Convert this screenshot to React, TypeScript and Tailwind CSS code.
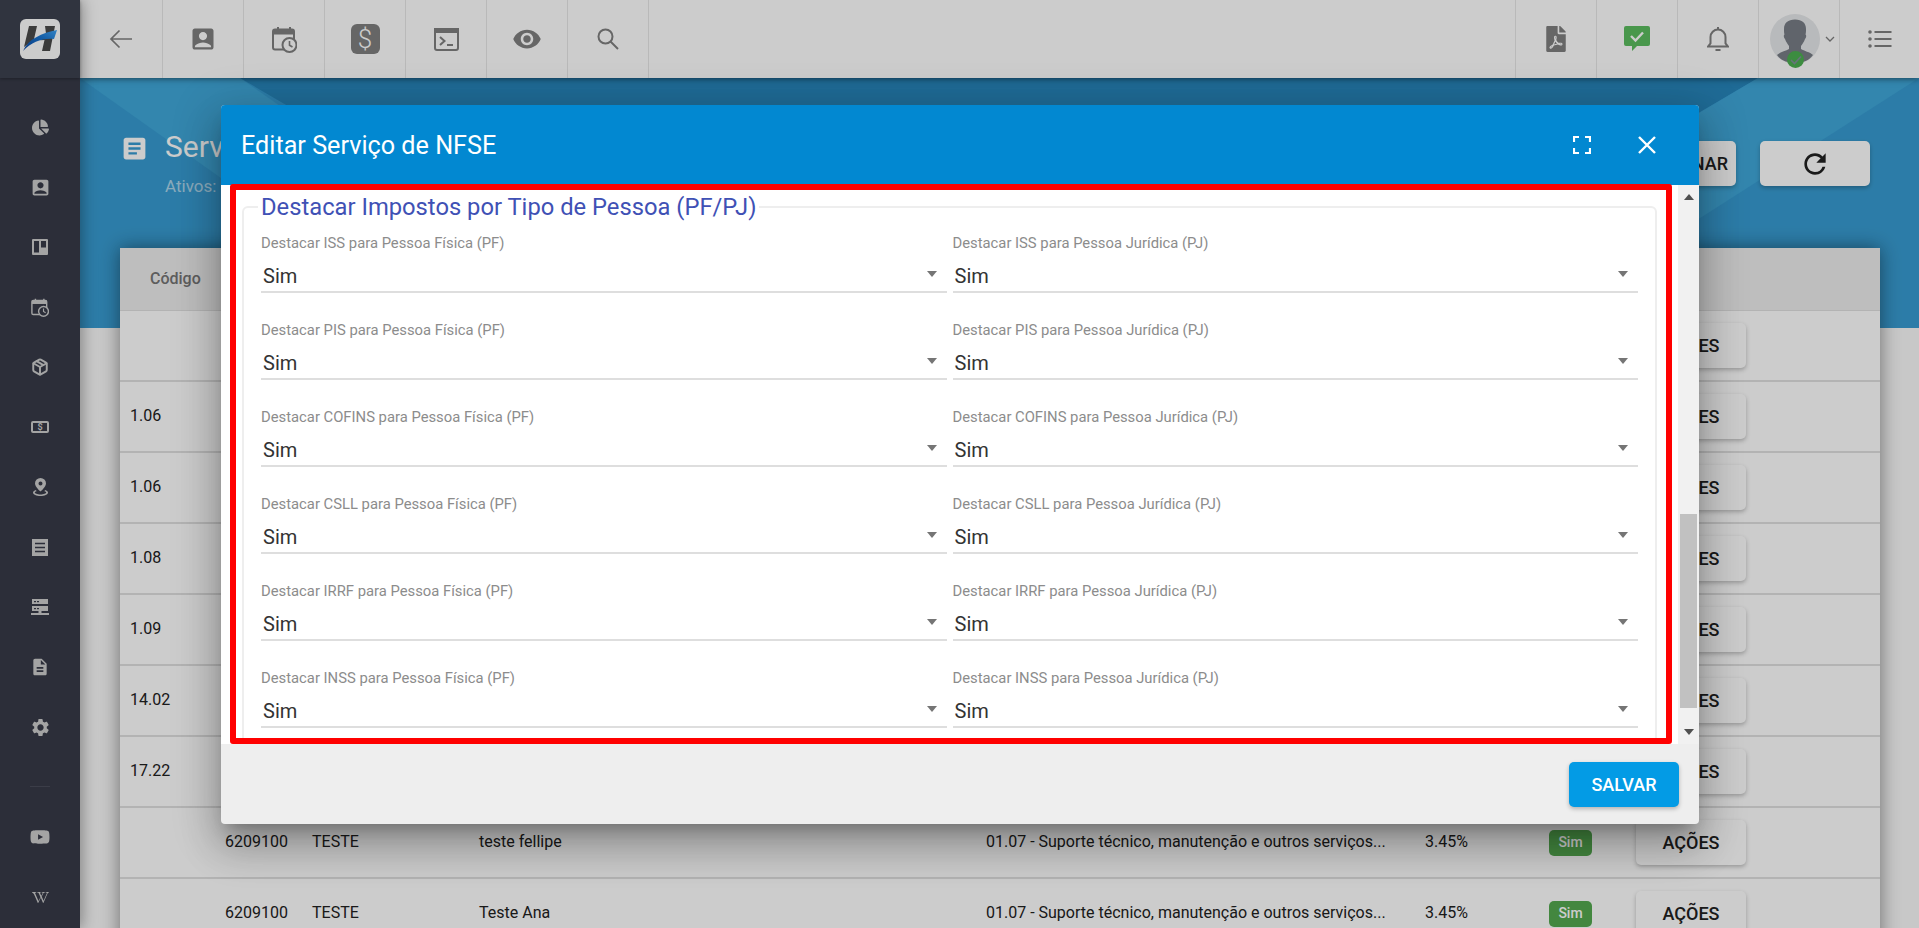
import React from "react";
import {
  MdAccountBox, MdVisibility, MdRefresh, MdArticle, MdDescription, MdSettings,
} from "react-icons/md";
import { FaFilePdf, FaChartPie, FaYoutube, FaWikipediaW } from "react-icons/fa";
import { FiPackage } from "react-icons/fi";

const CalendarClock = ({ w, h, color, bg }: { w: number; h: number; color: string; bg: string }) => (
  <svg width={w} height={h} viewBox="0 0 25 27" fill="none">
    <path d="M6 1v4M18 1v4" stroke={color} strokeWidth="2" />
    <rect x="1" y="3.5" width="21" height="20" rx="2" stroke={color} strokeWidth="2" />
    <rect x="1" y="3.5" width="21" height="5" fill={color} />
    <circle cx="17.5" cy="19" r="7" fill={bg} stroke={color} strokeWidth="2" />
    <path d="M17.5 15v4.2l3 1.8" stroke={color} strokeWidth="1.6" />
  </svg>
);

const Cell = ({ w = "w-[81px]", border = "border-l", children }: { w?: string; border?: string; children: React.ReactNode }) => (
  <div className={`${w} ${border} h-full shrink-0 border-[#e8e8e8] flex items-center justify-center`}>{children}</div>
);

const TopBar = () => (
  <div className="relative z-20 h-[78px] shrink-0 bg-white flex justify-between shadow-[0_1px_6px_rgba(0,0,0,0.5)]">
    <div className="flex h-full">
      <Cell w="w-[83px]" border="border-r">
        <svg width="24" height="20" viewBox="0 0 24 20" fill="none" stroke="#808080" strokeWidth="1.7">
          <path d="M23 10H2M10.5 1.5 2 10l8.5 8.5" />
        </svg>
      </Cell>
      <Cell border="border-r"><MdAccountBox size={28} color="#808080" /></Cell>
      <Cell border="border-r"><CalendarClock w={25} h={27} color="#808080" bg="#ffffff" /></Cell>
      <Cell border="border-r">
        <div className="w-[29px] h-[30px] rounded-md bg-[#808080] flex items-center justify-center text-white text-[26px] font-light leading-none">$</div>
      </Cell>
      <Cell border="border-r">
        <svg width="25" height="23" viewBox="0 0 25 23" fill="none" stroke="#808080" strokeWidth="2">
          <rect x="1" y="1" width="23" height="21" rx="2" />
          <rect x="1" y="1" width="23" height="3" fill="#808080" />
          <path d="m6 9 4.5 4L6 17M13 17h6" />
        </svg>
      </Cell>
      <Cell border="border-r"><MdVisibility size={30} color="#808080" /></Cell>
      <Cell border="border-r">
        <svg width="22" height="22" viewBox="0 0 22 22" fill="none" stroke="#808080" strokeWidth="2">
          <circle cx="8.5" cy="8.5" r="7" /><path d="m13.5 13.5 7.5 7.5" />
        </svg>
      </Cell>
    </div>
    <div className="flex h-full">
      <Cell><FaFilePdf size={26} color="#808080" /></Cell>
      <Cell>
        <svg width="26" height="26" viewBox="0 0 26 26">
          <path d="M2 0h22a2 2 0 0 1 2 2v16a2 2 0 0 1-2 2H13l-5 5v-5H2a2 2 0 0 1-2-2V2a2 2 0 0 1 2-2Z" fill="#5cbd60" />
          <path d="m7 10 4.5 4.5L19 6.5" stroke="#ffffff" strokeWidth="2.4" fill="none" />
        </svg>
      </Cell>
      <Cell>
        <svg width="22" height="26" viewBox="0 0 22 26" fill="none" stroke="#808080" strokeWidth="2">
          <path d="M1 20.5h20l-2.5-3V11a7.5 7.5 0 0 0-15 0v6.500Z" />
          <path d="M11 1v2M8.500 24h5" />
        </svg>
      </Cell>
      <Cell>
        <div className="relative w-full h-full flex items-center">
          <div className="relative ml-[11px] w-[50px] h-[50px] rounded-full bg-[#e7e9eb] overflow-hidden">
            <svg width="50" height="50" viewBox="0 0 50 50" fill="#787d86">
              <path d="M25 5.500c7 0 11 3.500 11 9.500 0 2 0 4-.5 5.500 1 .5 1 3-.5 4.500-1 3-3 5.500-4 7v3c3 2 9 3 12 6-4 6-11 8-18 8s-14-2-18-8c3-3 9-4 12-6v-3c-1-1.500-3-4-4-7-1.500-1.500-1.500-4-.5-4.500C14 19 14 17 14 15c0-6 4-9.500 11-9.500Z" />
            </svg>
          </div>
          <div className="absolute left-[28px] top-[51px] w-[17px] h-[17px] rounded-full bg-[#4caf50] flex items-center justify-center">
            <svg width="12" height="10" viewBox="0 0 12 10" fill="none" stroke="#80909a" strokeWidth="1.6"><path d="m1 5 3.500 3.500L11 1.500" /></svg>
          </div>
          <svg className="ml-[5px]" width="10" height="7" viewBox="0 0 10 7" fill="none" stroke="#808080" strokeWidth="1.3"><path d="m1 1 4 4 4-4" /></svg>
        </div>
      </Cell>
      <Cell w="w-[80px]">
        <svg width="24" height="20" viewBox="0 0 24 20" fill="#808080">
          <circle cx="2" cy="3" r="1.800" /><circle cx="2" cy="10" r="1.800" /><circle cx="2" cy="17" r="1.800" />
          <rect x="6.500" y="2" width="17" height="2" /><rect x="6.500" y="9" width="17" height="2" /><rect x="6.500" y="16" width="17" height="2" />
        </svg>
      </Cell>
    </div>
  </div>
);

const ICON = "#cdcdcd";
const DARK = "#373a48";
const SideSlot = ({ children }: { children: React.ReactNode }) => (
  <div className="h-[60px] flex items-center justify-center">{children}</div>
);

const Sidebar = () => (
  <div className="relative z-30 w-[80px] shrink-0 h-full bg-[#373a48] flex flex-col shadow-[2px_0_14px_rgba(0,0,0,0.35)]">
    <div className="h-[78px] shrink-0 bg-[#3d414f] flex items-center justify-center shadow-[0_1px_3px_rgba(0,0,0,0.3)]">
      <svg width="40" height="40" viewBox="0 0 40 40">
        <defs>
          <linearGradient id="logoBlue" x1="0" y1="1" x2="1" y2="0">
            <stop offset="0" stopColor="#0d47a1" />
            <stop offset="0.6" stopColor="#1976d2" />
            <stop offset="1" stopColor="#42a5f5" />
          </linearGradient>
        </defs>
        <rect width="40" height="40" rx="6" fill="#ffffff" />
        <path d="M9 7h8l-3.200 14L4 28ZM25 7h10l-5 25h-8l2.500-11-4 .2 1.500-2 4.500-1Z" fill="#4a4a4a" />
        <path d="M3 32C8 20 22 14 37 11l-3 9C22 19 12 23 3 32Z" fill="url(#logoBlue)" />
      </svg>
    </div>
    <div className="pt-[19px] flex flex-col">
      <SideSlot><FaChartPie size={17} color={ICON} /></SideSlot>
      <SideSlot><MdAccountBox size={21} color={ICON} /></SideSlot>
      <SideSlot>
        <svg width="16" height="16" viewBox="0 0 16 16"><rect width="16" height="16" rx="1" fill={ICON} /><rect x="2" y="2" width="5" height="11.500" fill={DARK} /><rect x="9" y="2" width="5" height="6.500" fill={DARK} /></svg>
      </SideSlot>
      <SideSlot><CalendarClock w={18} h={19} color={ICON} bg={DARK} /></SideSlot>
      <SideSlot><FiPackage size={18} color={ICON} strokeWidth={2.6} /></SideSlot>
      <SideSlot>
        <div className="w-[18px] h-[12px] border-2 border-[#cdcdcd] rounded-[2px] bg-[#373a48] flex items-center justify-center text-[9px] font-bold text-[#cdcdcd] leading-none">$</div>
      </SideSlot>
      <SideSlot>
        <svg width="15" height="18" viewBox="0 0 15 18" fill={ICON}>
          <path fillRule="evenodd" d="M7.500 0a5.500 5.500 0 0 1 5.500 5.500C13 9 7.500 13.500 7.500 13.500S2 9 2 5.500A5.500 5.500 0 0 1 7.500 0Zm0 3.500a2 2 0 1 0 0 4 2 2 0 0 0 0-4Z" />
          <path d="M3 12c-2 .7-3 1.500-3 2.500C0 16.500 3.500 18 7.500 18S15 16.500 15 14.500c0-1-1-1.800-3-2.500l-.5 1.300c1 .3 1.700.7 1.700 1.200 0 .8-2.500 2-5.700 2s-5.700-1.200-5.700-2c0-.5.700-.9 1.700-1.200Z" />
        </svg>
      </SideSlot>
      <SideSlot>
        <svg width="16" height="17" viewBox="0 0 16 17"><rect width="16" height="17" fill={ICON} /><path d="M3 4.500h10M3 8.500h10M3 12.500h10" stroke={DARK} strokeWidth="1.500" /></svg>
      </SideSlot>
      <SideSlot>
        <svg width="18" height="17" viewBox="0 0 18 17" fill={ICON}>
          <rect x="1" y="0" width="16" height="5" /><rect x="1" y="7" width="16" height="5" /><rect x="7.500" y="12" width="3" height="3" /><rect x="0" y="14" width="18" height="2" />
          <rect x="3" y="2" width="2" height="1.200" fill={DARK} /><rect x="6" y="2" width="2" height="1.200" fill={DARK} /><rect x="3" y="9" width="2" height="1.200" fill={DARK} /><rect x="6" y="9" width="2" height="1.200" fill={DARK} />
        </svg>
      </SideSlot>
      <SideSlot><MdDescription size={20} color={ICON} /></SideSlot>
      <SideSlot><MdSettings size={21} color={ICON} /></SideSlot>
    </div>
    <div className="mt-[29px] mx-[30px] h-px bg-[#4a4d5a]" />
    <div className="mt-[20px] flex flex-col">
      <SideSlot><FaYoutube size={20} color={ICON} /></SideSlot>
      <SideSlot><FaWikipediaW size={17} color={ICON} /></SideSlot>
    </div>
  </div>
);

const Hero = () => (
  <div className="relative h-[250px] shrink-0 bg-[#389cd2] overflow-hidden">
    <svg className="absolute inset-0" width="1839" height="250" viewBox="0 0 1839 250">
      <polygon points="160,0 1678,0 1320,210 520,210" fill="#2786bc" />
      <polygon points="0,0 160,0 260,70 240,150 141,100" fill="#40a8da" />
      <polygon points="1678,0 1839,0 1617,142 1520,142 1560,70" fill="#40a8da" />
    </svg>
    <div className="relative flex pl-[43px] pr-[49px] pt-[51px] text-white">
      <MdArticle size={29} className="mt-[5px] ml-[-3px] text-white" />
      <div className="ml-[16px] w-[56px] overflow-hidden whitespace-nowrap">
        <div className="text-[30px] leading-[36px]">Serviços</div>
        <div className="mt-[11px] text-[17px] leading-[20px] text-white/60">Ativos: 9</div>
      </div>
      <div className="ml-auto mt-[12px] flex gap-[24px]">
        <button className="h-[45px] w-[116px] rounded-[5px] bg-white text-[#212121] text-[18px] font-medium flex items-center justify-end pr-[8px] shadow-[0_2px_4px_rgba(0,0,0,0.25)]">ADICIONAR</button>
        <button className="h-[45px] w-[110px] rounded-[5px] bg-white text-[#212121] flex items-center justify-center shadow-[0_2px_4px_rgba(0,0,0,0.25)]">
          <MdRefresh size={32} />
        </button>
      </div>
    </div>
  </div>
);

type Row = { code?: string; cnae?: string; t?: string; name?: string; serv?: string; pct?: string };
const SERV = "01.07 - Suporte técnico, manutenção e outros serviços...";
const rows: Row[] = [
  {}, { code: "1.06" }, { code: "1.06" }, { code: "1.08" }, { code: "1.09" }, { code: "14.02" }, { code: "17.22" },
  { cnae: "6209100", t: "TESTE", name: "teste fellipe", serv: SERV, pct: "3.45%" },
  { cnae: "6209100", t: "TESTE", name: "Teste Ana", serv: SERV, pct: "3.45%" },
];

const Table = () => (
  <div className="relative z-10 mt-[-80px] ml-[40px] mr-[39px] bg-white shadow-[0_0_18px_rgba(0,0,0,0.45)] text-[16px] text-[#212121]">
    <div className="h-[63px] bg-[#eeeeee] border-b border-[#e0e0e0] flex items-center pl-[30px] font-medium text-[#757575]">Código</div>
    {rows.map((r, i) => (
      <div key={i} className="h-[71px] border-b-2 border-[#e0e0e0] grid grid-cols-[96px_87px_166px_507px_439px_124px_87px_auto] items-center pl-[10px]">
        <div className="pb-[2px]">{r.code}</div>
        <div className="pb-[2px] ml-[-1px]">{r.cnae}</div>
        <div className="pb-[2px] ml-[-1px]">{r.t}</div>
        <div className="pb-[2px]">{r.name}</div>
        <div className="pb-[2px]">{r.serv}</div>
        <div className="pb-[2px]">{r.pct}</div>
        <div>
          {r.cnae && <span className="flex w-[43px] h-[26px] rounded-[5px] bg-[#54a94f] text-white text-[14px] font-medium items-center justify-center">Sim</span>}
        </div>
        <button className="w-[110px] h-[45px] rounded-[5px] bg-white text-[18px] font-medium shadow-[0_2px_4px_rgba(0,0,0,0.25)]">AÇÕES</button>
      </div>
    ))}
  </div>
);

const taxes = ["ISS", "PIS", "COFINS", "CSLL", "IRRF", "INSS"];

const Field = ({ label }: { label: string }) => (
  <div className="h-[87px]">
    <div className="h-[20px] text-[14.800px] leading-[20px] text-[#8c8c8c]">{label}</div>
    <div className="mt-[8px] h-[32px] border-b-2 border-[#dedede] flex items-center justify-between pl-[2px] pr-[10px]">
      <span className="text-[20px] text-[#333333] leading-[30px]">Sim</span>
      <svg className="mb-[4px]" width="10" height="6" viewBox="0 0 10 6" fill="#757575"><path d="M0 0h10L5 6Z" /></svg>
    </div>
  </div>
);

const Modal = () => (
  <div className="absolute z-50 left-[221px] top-[105px] w-[1478px] h-[719px] rounded-[4px] overflow-hidden flex flex-col bg-[#eeeeee] shadow-[0_11px_15px_-7px_rgba(0,0,0,0.25),0_24px_38px_3px_rgba(0,0,0,0.18),0_9px_46px_8px_rgba(0,0,0,0.16)]">
    <div className="h-[80px] shrink-0 bg-[#0288d1] flex items-center pl-[20px] text-white">
      <div className="text-[25.200px] pt-[1px]">Editar Serviço de NFSE</div>
      <div className="ml-auto w-[24px] h-[24px] mr-[41px] flex items-center justify-center">
        <svg width="18" height="18" viewBox="0 0 18 18" fill="none" stroke="#ffffff" strokeWidth="2.200">
          <path d="M1 6V1h5M12 1h5v5M17 12v5h-5M6 17H1v-5" />
        </svg>
      </div>
      <div className="w-[24px] h-[24px] mr-[40px] flex items-center justify-center">
        <svg width="20" height="20" viewBox="0 0 20 20" fill="none" stroke="#ffffff" strokeWidth="2.400">
          <path d="m2 2 16 16M18 2 2 18" />
        </svg>
      </div>
    </div>
    <div className="h-[559px] shrink-0 flex bg-white">
      <div className="flex-1 overflow-hidden px-[21px] pt-[7px]">
        <fieldset className="h-[640px] border-2 border-[#eeeeee] rounded-md px-[17px]">
          <legend className="ml-[-3px] px-[3px] text-[23.750px] leading-[30px] text-[#3f51b5]">Destacar Impostos por Tipo de Pessoa (PF/PJ)</legend>
          <div className="pt-[11px] grid grid-cols-2 gap-x-[6px]">
            {taxes.flatMap((t) => [
              <Field key={t + "f"} label={`Destacar ${t} para Pessoa Física (PF)`} />,
              <Field key={t + "j"} label={`Destacar ${t} para Pessoa Jurídica (PJ)`} />,
            ])}
          </div>
        </fieldset>
      </div>
      <div className="w-[21px] shrink-0 bg-[#f1f1f1] flex flex-col items-center justify-between py-[9px] relative">
        <svg width="10" height="6" viewBox="0 0 10 6" fill="#505050"><path d="M0 6h10L5 0Z" /></svg>
        <svg width="10" height="6" viewBox="0 0 10 6" fill="#505050"><path d="M0 0h10L5 6Z" /></svg>
        <div className="absolute left-[2px] top-[329px] w-[17px] h-[194px] bg-[#c1c1c1]" />
      </div>
    </div>
    <div className="flex-1 flex justify-end items-start pt-[18px] pr-[20px]">
      <button className="w-[110px] h-[45px] rounded-[5px] bg-[#039be5] text-white text-[18px] font-medium shadow-[0_2px_4px_rgba(0,0,0,0.25)]">SALVAR</button>
    </div>
    <div className="absolute left-[9px] top-[79px] w-[1442px] h-[560px] border-[6px] border-[#ff0000] rounded-[3px] pointer-events-none" />
  </div>
);

export default function App() {
  return (
    <div className="relative w-full h-screen overflow-hidden flex bg-[#fafafa] font-['Roboto',sans-serif]">
      <Sidebar />
      <div className="flex-1 min-w-0 flex flex-col">
        <TopBar />
        <Hero />
        <Table />
      </div>
      <div className="absolute inset-0 z-40 bg-black/20" />
      <Modal />
    </div>
  );
}
